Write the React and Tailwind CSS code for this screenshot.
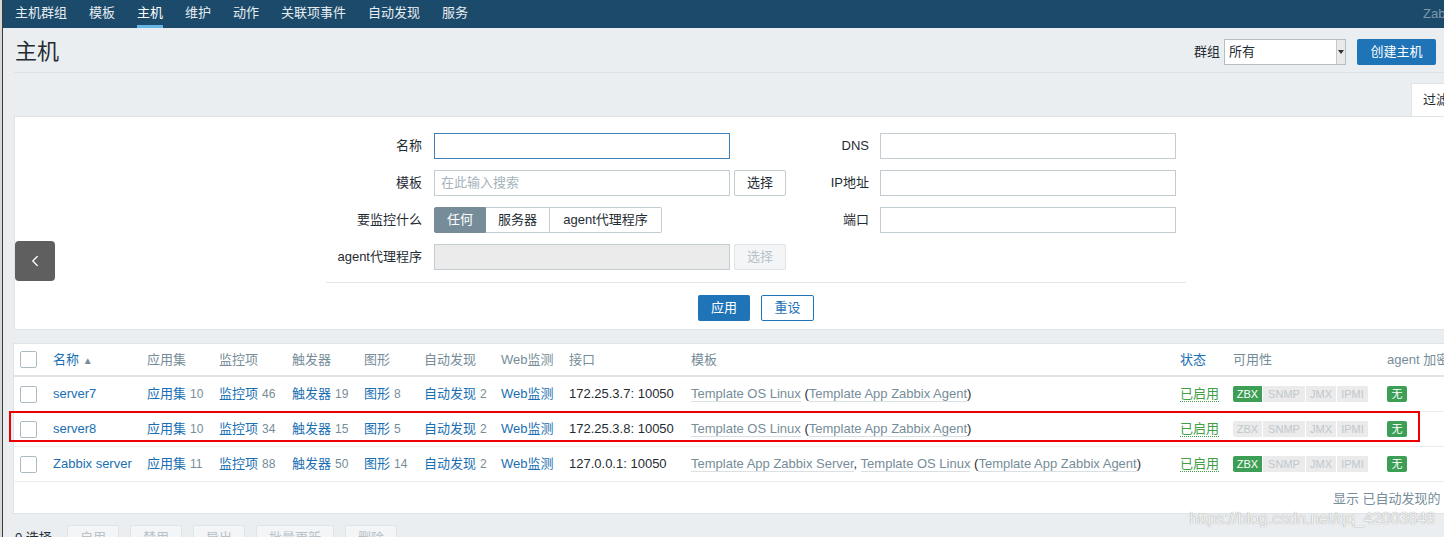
import { ChevronLeft } from "lucide-react";

const navItems = ["主机群组", "模板", "主机", "维护", "动作", "关联项事件", "自动发现", "服务"];

const hosts = [
  { name: "server7", apps: 10, items: 46, triggers: 19, graphs: 8, disc: 2, ip: "172.25.3.7: 10050", server: false, zbx: true },
  { name: "server8", apps: 10, items: 34, triggers: 15, graphs: 5, disc: 2, ip: "172.25.3.8: 10050", server: false, zbx: false },
  { name: "Zabbix server", apps: 11, items: 88, triggers: 50, graphs: 14, disc: 2, ip: "127.0.0.1: 10050", server: true, zbx: true },
];

const cols = "grid grid-cols-[39px_94px_72px_73px_72px_60px_77px_68px_122px_489px_53px_154px_1fr]";

function Checkbox() {
  return <span className="block w-[17px] h-[17px] border border-[#acbbc2] rounded-[2px] bg-white" />;
}

function Tpl({ children }) {
  return <span className="text-[#768d99] border-b border-[#d9e1e5]">{children}</span>;
}

function Link({ label, count }) {
  return (
    <span className="whitespace-nowrap">
      <span className="text-[#1a6fb3]">{label}</span>
      {count !== undefined && <span className="text-[#768d99] text-[12px] ml-[4px]">{count}</span>}
    </span>
  );
}

function Avail({ zbx }) {
  const grey = "h-full flex items-center justify-center bg-[#ebebeb] text-[#c0c8cd]";
  return (
    <div className="flex h-[16px] text-[11px] rounded-[2px] overflow-hidden gap-px bg-white">
      <span className={zbx ? "w-[29px] h-full flex items-center justify-center bg-[#3d9f55] text-white" : "w-[29px] " + grey}>ZBX</span>
      <span className={"w-[42px] " + grey}>SNMP</span>
      <span className={"w-[30px] " + grey}>JMX</span>
      <span className={"w-[31px] " + grey}>IPMI</span>
    </div>
  );
}

function Field({ w = "w-[296px]", focus, placeholder, disabled }) {
  return (
    <div
      className={`${w} h-[26px] border ${focus ? "border-[#3c81b9]" : "border-[#c3ccd1]"} ${disabled ? "bg-[#ebebeb]" : "bg-white"} flex items-center px-[6px] text-[13px] text-[#a6b3ba]`}
    >
      {placeholder}
    </div>
  );
}

function SmallBtn({ children, disabled }) {
  return (
    <div
      className={`w-[52px] h-[26px] border rounded-[2px] flex items-center justify-center text-[13px] ${
        disabled ? "border-[#dfe4e7] bg-[#f4f5f6] text-[#b8c2c8]" : "border-[#c3ccd1] bg-white text-[#1f2c33]"
      }`}
    >
      {children}
    </div>
  );
}

export default function App() {
  return (
    <div className="relative w-[1444px] h-[537px] overflow-hidden flex bg-[#ebeef0] text-[#1f2c33] font-['Liberation_Sans','Noto_Sans_CJK_SC',sans-serif]">
      {/* left window edge */}
      <div className="w-[3px] shrink-0 bg-[#d8d8d8] border-r border-[#3a3a3a]" />

      <div className="flex-1 min-w-0">
        {/* top nav */}
        <div className="h-[28px] bg-[#1c4a6b] flex items-stretch pl-[12px] gap-[22px] text-[13px] text-[#e6edf2]">
          {navItems.map((n) => (
            <div
              key={n}
              className={`flex items-center border-b-[3px] ${n === "主机" ? "border-[#66b5e6] text-white" : "border-transparent"}`}
            >
              {n}
            </div>
          ))}
          <div className="ml-auto w-[21px] overflow-hidden whitespace-nowrap flex items-center text-[13px] text-[#7f98aa]">Zabbix</div>
        </div>

        {/* header */}
        <div className="h-[45px] ml-[11px] pt-[4px] border-b border-[#dde2e5] flex items-center justify-between pr-[8px]">
          <h1 className="text-[22px] leading-none pl-px">主机</h1>
          <div className="flex items-center">
            <span className="text-[13px] mr-[4px]">群组</span>
            <div className="w-[122px] h-[26px] bg-white border border-[#b5bec4] flex items-center text-[13px] pl-[4px]">
              <span className="flex-1">所有</span>
              <span className="w-[9px] h-full bg-[#e9e9e9] border-l border-[#c8c8c8] flex items-center justify-center">
                <span className="block w-0 h-0 border-l-[3px] border-r-[3px] border-t-[4px] border-l-transparent border-r-transparent border-t-[#333]" />
              </span>
            </div>
            <button className="ml-[11px] w-[79px] h-[26px] bg-[#1f73b7] rounded-[2px] text-white text-[13px]">创建主机</button>
          </div>
        </div>

        {/* filter tab */}
        <div className="mt-[10px] h-[33px] flex justify-end">
          <div className="w-[33px] h-full bg-white border-t border-l border-[#dfe4e7] rounded-tl-[2px] overflow-hidden whitespace-nowrap pl-[11px] flex items-center text-[13px]">
            过滤器
          </div>
        </div>

        {/* filter panel */}
        <div className="ml-[11px] h-[214px] bg-white border-y border-l border-[#dfe4e7] pt-[16px]">
          <div className="flex">
            <div className="grid grid-cols-[419px_auto] gap-y-[11px] items-center">
              <span className="text-[13px] text-right pr-[12px]">名称</span>
              <Field focus />
              <span className="text-[13px] text-right pr-[12px]">模板</span>
              <div className="flex gap-[4px]">
                <Field placeholder="在此输入搜索" />
                <SmallBtn>选择</SmallBtn>
              </div>
              <span className="text-[13px] text-right pr-[12px]">要监控什么</span>
              <div className="flex h-[26px] text-[13px]">
                <span className="w-[52px] bg-[#768d99] text-white flex items-center justify-center rounded-l-[2px] border border-[#768d99]">任何</span>
                <span className="w-[64px] border-y border-r border-[#c3ccd1] flex items-center justify-center">服务器</span>
                <span className="w-[112px] border-y border-r border-[#c3ccd1] flex items-center justify-center rounded-r-[2px]">agent代理程序</span>
              </div>
              <span className="text-[13px] text-right pr-[12px]">agent代理程序</span>
              <div className="flex gap-[4px]">
                <Field disabled />
                <SmallBtn disabled>选择</SmallBtn>
              </div>
            </div>
            <div className="grid grid-cols-[94px_296px] gap-y-[11px] items-center self-start">
              <span className="text-[13px] text-right pr-[11px]">DNS</span>
              <Field />
              <span className="text-[13px] text-right pr-[11px]">IP地址</span>
              <Field />
              <span className="text-[13px] text-right pr-[11px]">端口</span>
              <Field />
            </div>
          </div>
          <div className="ml-[311px] w-[860px] mt-[12px] border-t border-[#e3e7ea] pt-[12px] flex justify-center gap-[11px]">
            <button className="w-[52px] h-[26px] bg-[#1f73b7] rounded-[2px] text-white text-[13px]">应用</button>
            <button className="w-[53px] h-[26px] bg-white border border-[#1f73b7] rounded-[2px] text-[#1f73b7] text-[13px]">重设</button>
          </div>
        </div>

        {/* hosts table */}
        <div className="mt-[13px] ml-[10px] h-[171px] bg-white border-y border-l border-[#dfe4e7] text-[13px]">
          <div className={`${cols} h-[33px] items-center border-b-2 border-[#dfe4e7] text-[#768d99]`}>
            <div className="pl-[6px]"><Checkbox /></div>
            <div className="text-[#1a6fb3]">名称 <span className="text-[#768d99] text-[10px]">▲</span></div>
            <div>应用集</div>
            <div>监控项</div>
            <div>触发器</div>
            <div>图形</div>
            <div>自动发现</div>
            <div>Web监测</div>
            <div>接口</div>
            <div>模板</div>
            <div className="text-[#1a6fb3]">状态</div>
            <div>可用性</div>
            <div className="whitespace-nowrap overflow-hidden">agent 加密</div>
          </div>
          {hosts.map((h) => (
            <div key={h.name} className={`${cols} h-[35px] items-center border-b border-[#ebeef0]`}>
              <div className="pl-[6px]"><Checkbox /></div>
              <div className="text-[#1a6fb3] whitespace-nowrap">{h.name}</div>
              <div><Link label="应用集" count={h.apps} /></div>
              <div><Link label="监控项" count={h.items} /></div>
              <div><Link label="触发器" count={h.triggers} /></div>
              <div><Link label="图形" count={h.graphs} /></div>
              <div><Link label="自动发现" count={h.disc} /></div>
              <div><Link label="Web监测" /></div>
              <div className="whitespace-nowrap">{h.ip}</div>
              <div className="whitespace-nowrap">
                {h.server && (
                  <>
                    <Tpl>Template App Zabbix Server</Tpl>,{" "}
                  </>
                )}
                <Tpl>Template OS Linux</Tpl> (<Tpl>Template App Zabbix Agent</Tpl>)
              </div>
              <div>
                <span className="text-[#429e47] border-b border-dotted border-[#429e47]">已启用</span>
              </div>
              <div><Avail zbx={h.zbx} /></div>
              <div>
                <span className="w-[20px] h-[16px] bg-[#3d9f55] text-white text-[11px] rounded-[2px] flex items-center justify-center">无</span>
              </div>
            </div>
          ))}
          <div className="h-[33px] flex items-center justify-end">
            <span className="w-[111px] overflow-hidden whitespace-nowrap text-[#768d99]">显示 已自动发现的 3中的3</span>
          </div>
        </div>

        {/* bulk actions */}
        <div className="mt-[11px] ml-[12px] flex items-center gap-[11px] text-[13px]">
          <span className="w-[41px] text-[#1f2c33]">0 选择</span>
          {["启用", "禁用", "导出", "批量更新", "删除"].map((b) => (
            <div
              key={b}
              className={`${b === "批量更新" ? "w-[78px]" : "w-[52px]"} h-[26px] border border-[#dfe4e7] bg-[#f4f5f6] rounded-[2px] flex items-center justify-center text-[#b8c2c8]`}
            >
              {b}
            </div>
          ))}
        </div>
      </div>

      {/* sidebar toggle */}
      <div className="absolute left-[15px] top-[241px] w-[40px] h-[40px] bg-[#5f5f5f] rounded-[4px] flex items-center justify-center text-white">
        <ChevronLeft size={18} strokeWidth={1.75} />
      </div>

      {/* highlight annotation */}
      <div className="absolute left-[9px] top-[411px] w-[1411px] h-[31px] border-2 border-[#ee0000]" />

      {/* watermark */}
      <div className="absolute right-[9px] top-[507px] text-[16px] text-[#f2f2f2] [text-shadow:0_0_1px_#8a8a8a] whitespace-nowrap">
        https://blog.csdn.net/qq_42003848
      </div>
    </div>
  );
}
